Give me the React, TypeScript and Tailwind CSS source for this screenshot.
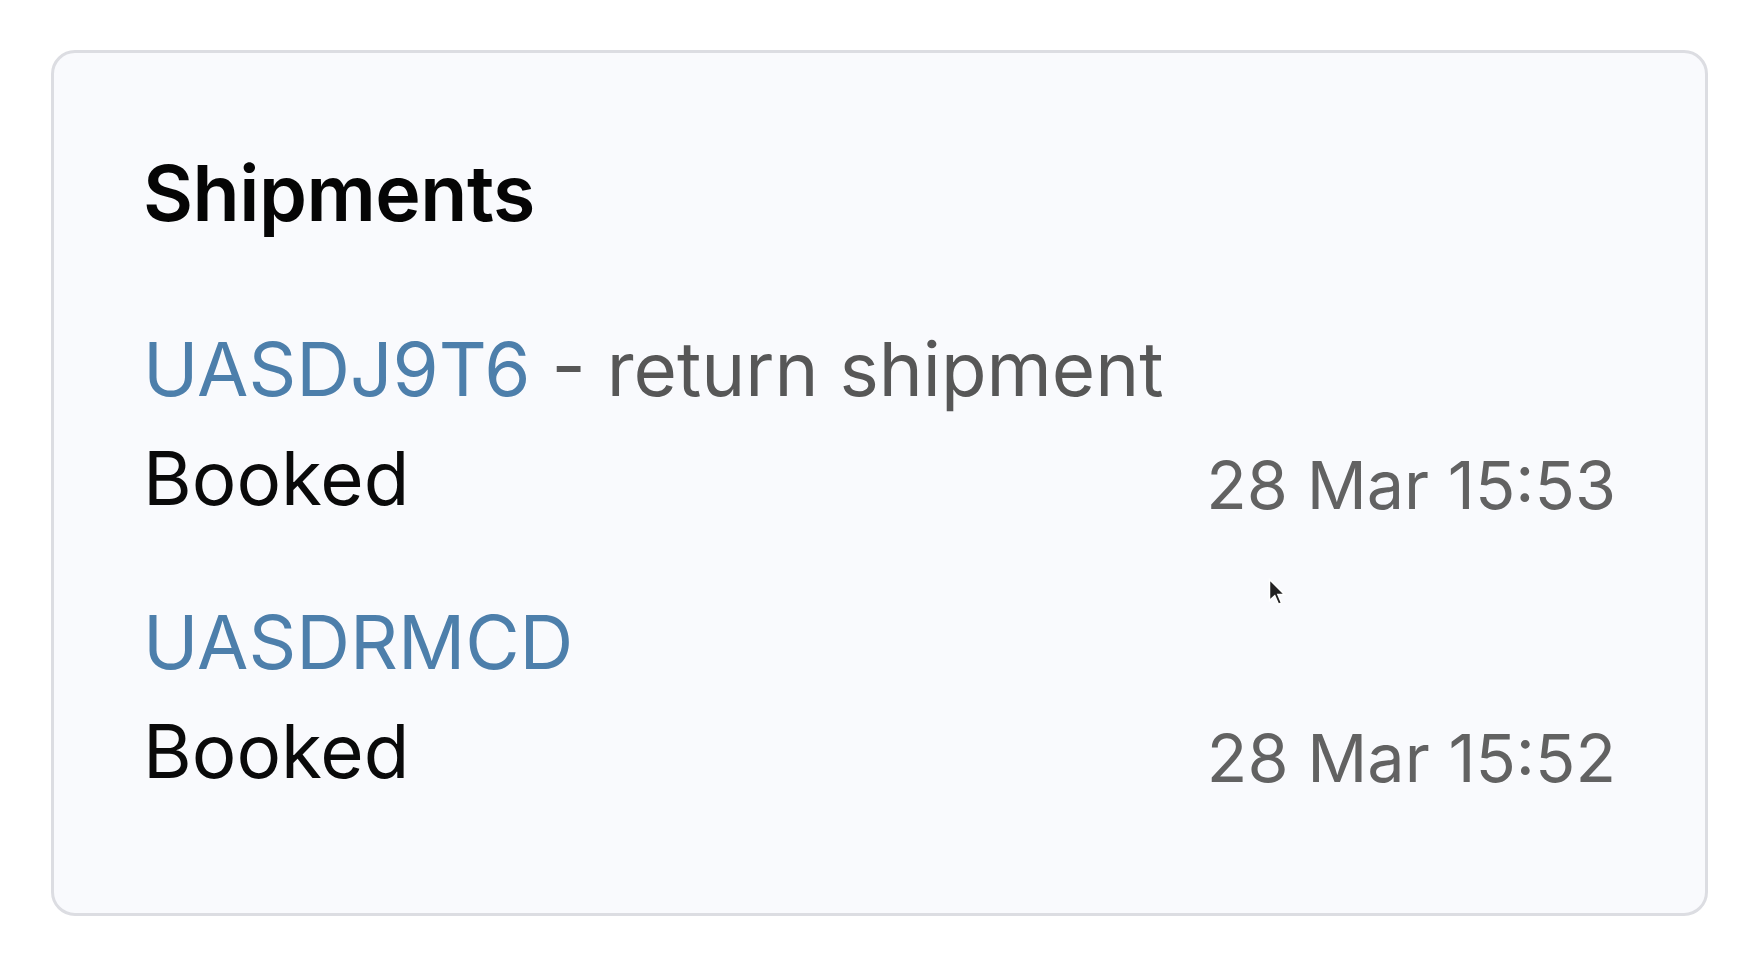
import React from "react";

type Shipment = {
  code: string;
  note?: string;
  status: string;
  time: string;
};

const shipments: Shipment[] = [
  { code: "UASDJ9T6", note: "return shipment", status: "Booked", time: "28 Mar 15:53" },
  { code: "UASDRMCD", status: "Booked", time: "28 Mar 15:52" },
];

function Cursor() {
  return (
    <svg
      className="absolute left-[1268px] top-[578px]"
      width="18"
      height="30"
      viewBox="0 0 12 20"
    >
      <path d="M1 1 L1 15 L4.5 11.8 L7 17.5 L9 16.6 L6.6 11 L11 11 Z" fill="#222" stroke="#fff" strokeWidth="1" />
    </svg>
  );
}

export default function App() {
  return (
    <div className="relative min-h-[960px] w-[1750px] bg-white pt-[50px] pl-[51px] font-['Inter',sans-serif]">
      <div className="w-[1657px] h-[866px] rounded-[24px] border-[3px] border-[#dcdde2] bg-[#f9fafd] px-[89px] pt-[102px]">
        <h2 className="text-[77px] leading-[76px] font-semibold text-[#050505] tracking-[-0.5px]">Shipments</h2>

        <div className="mt-[84px] flex flex-col gap-[52px]">
          {shipments.map((s) => (
            <div key={s.code}>
              <div className="text-[74.5px] leading-[109px] whitespace-nowrap">
                <a className="text-[#4d7fab]">{s.code}</a>
                {s.note && <span className="text-[#575757]"> - {s.note}</span>}
              </div>
              <div className="flex items-baseline justify-between leading-[109px]">
                <span className="text-[74.5px] text-[#0a0a0a]">{s.status}</span>
                <span className="text-[66.5px] text-[#626262] relative top-[4px]">{s.time}</span>
              </div>
            </div>
          ))}
        </div>
      </div>
      <Cursor />
    </div>
  );
}
